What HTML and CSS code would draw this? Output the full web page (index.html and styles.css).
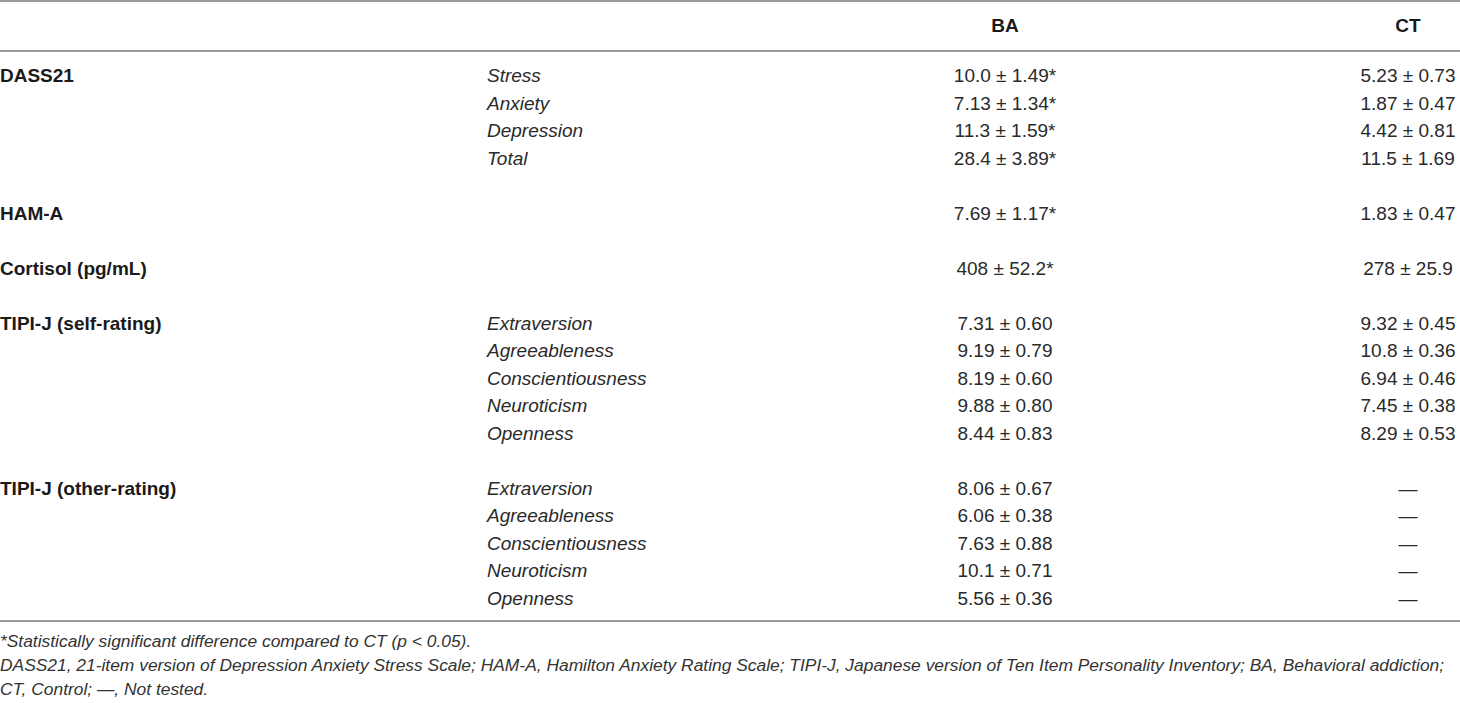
FILE: index.html
```html
<!DOCTYPE html>
<html lang="en">
<head>
<meta charset="utf-8">
<title>Table</title>
<link rel="stylesheet" href="styles.css">
</head>
<body>
<table class="data">
  <colgroup>
    <col class="c-label">
    <col class="c-sub">
    <col class="c-ba">
    <col class="c-ct">
  </colgroup>
  <thead>
    <tr>
      <th></th>
      <th></th>
      <th class="num">BA</th>
      <th class="num">CT</th>
    </tr>
  </thead>
  <tbody>
    <tr class="first"><td class="lbl">DASS21</td><td class="sub">Stress</td><td class="num">10.0 ± 1.49*</td><td class="num">5.23 ± 0.73</td></tr>
    <tr><td></td><td class="sub">Anxiety</td><td class="num">7.13 ± 1.34*</td><td class="num">1.87 ± 0.47</td></tr>
    <tr><td></td><td class="sub">Depression</td><td class="num">11.3 ± 1.59*</td><td class="num">4.42 ± 0.81</td></tr>
    <tr><td></td><td class="sub">Total</td><td class="num">28.4 ± 3.89*</td><td class="num">11.5 ± 1.69</td></tr>
    <tr class="grp"><td class="lbl">HAM-A</td><td class="sub"></td><td class="num">7.69 ± 1.17*</td><td class="num">1.83 ± 0.47</td></tr>
    <tr class="grp"><td class="lbl">Cortisol (pg/mL)</td><td class="sub"></td><td class="num">408 ± 52.2*</td><td class="num">278 ± 25.9</td></tr>
    <tr class="grp"><td class="lbl">TIPI-J (self-rating)</td><td class="sub">Extraversion</td><td class="num">7.31 ± 0.60</td><td class="num">9.32 ± 0.45</td></tr>
    <tr><td></td><td class="sub">Agreeableness</td><td class="num">9.19 ± 0.79</td><td class="num">10.8 ± 0.36</td></tr>
    <tr><td></td><td class="sub">Conscientiousness</td><td class="num">8.19 ± 0.60</td><td class="num">6.94 ± 0.46</td></tr>
    <tr><td></td><td class="sub">Neuroticism</td><td class="num">9.88 ± 0.80</td><td class="num">7.45 ± 0.38</td></tr>
    <tr><td></td><td class="sub">Openness</td><td class="num">8.44 ± 0.83</td><td class="num">8.29 ± 0.53</td></tr>
    <tr class="grp"><td class="lbl">TIPI-J (other-rating)</td><td class="sub">Extraversion</td><td class="num">8.06 ± 0.67</td><td class="num">—</td></tr>
    <tr><td></td><td class="sub">Agreeableness</td><td class="num">6.06 ± 0.38</td><td class="num">—</td></tr>
    <tr><td></td><td class="sub">Conscientiousness</td><td class="num">7.63 ± 0.88</td><td class="num">—</td></tr>
    <tr><td></td><td class="sub">Neuroticism</td><td class="num">10.1 ± 0.71</td><td class="num">—</td></tr>
    <tr class="last"><td></td><td class="sub">Openness</td><td class="num">5.56 ± 0.36</td><td class="num">—</td></tr>
  </tbody>
</table>
<div class="notes">
  <p>*Statistically significant difference compared to CT (p &lt; 0.05).</p>
  <p>DASS21, 21-item version of Depression Anxiety Stress Scale; HAM-A, Hamilton Anxiety Rating Scale; TIPI-J, Japanese version of Ten Item Personality Inventory; BA, Behavioral addiction; CT, Control; —, Not tested.</p>
</div>
</body>
</html>
```

FILE: styles.css
```css
html, body {
  margin: 0;
  padding: 0;
  background: #fff;
}
body {
  width: 1460px;
  font-family: "Liberation Sans", Arial, sans-serif;
  color: #2a2a2a;
}
.data {
  width: 1460px;
  border-collapse: collapse;
  table-layout: fixed;
  font-size: 19px;
  border-top: 2px solid #9a9a9a;
  border-bottom: 2px solid #9a9a9a;
}
.c-label { width: 487px; }
.c-sub { width: 167px; }
.c-ba { width: 702px; }
.c-ct { width: 104px; }
.data th {
  height: 48px;
  padding: 0;
  font-weight: bold;
  color: #1a1a1a;
  border-bottom: 2px solid #9a9a9a;
  vertical-align: middle;
}
.data td {
  padding: 0;
  height: 27.5px;
  line-height: 27.5px;
  white-space: nowrap;
  vertical-align: middle;
}
.data .num { text-align: center; }
.data .lbl { font-weight: bold; text-align: left; color: #1a1a1a; }
.data .sub { font-style: italic; text-align: left; }
.data tr.first td { padding-top: 10px; }
.data tr.grp td { padding-top: 27.5px; }
.data tr.last td { padding-bottom: 8px; }
.notes {
  font-size: 17.4px;
  font-style: italic;
  color: #333;
  padding-top: 7px;
  line-height: 24px;
}
.notes p { margin: 0; }
```
